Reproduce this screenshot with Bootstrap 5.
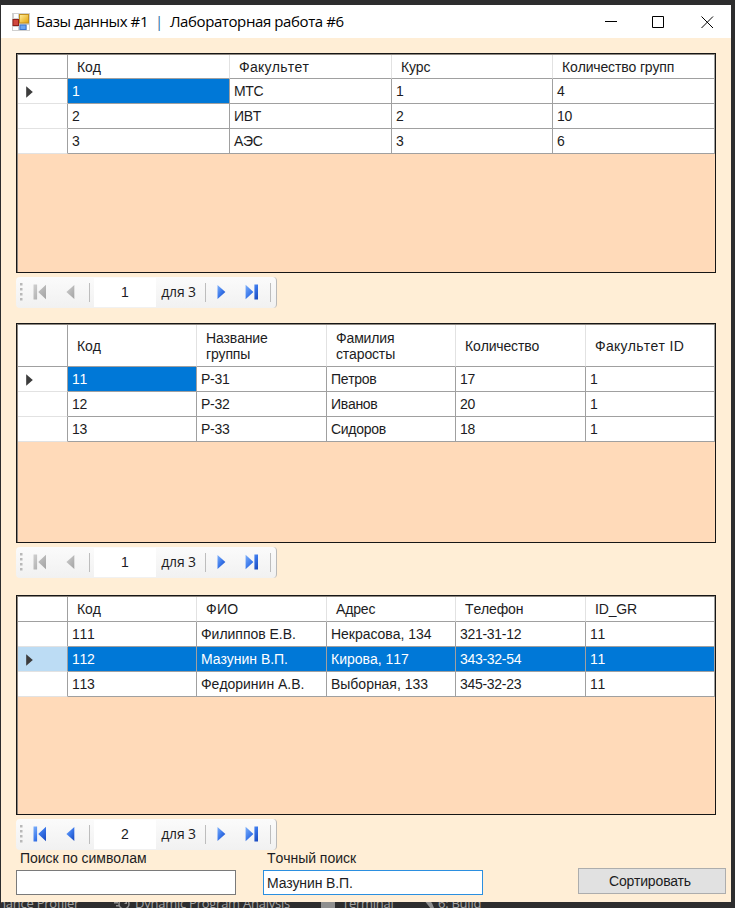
<!DOCTYPE html>
<html lang="ru">
<head>
<meta charset="utf-8">
<title>Базы данных #1 | Лабораторная работа #6</title>
<link href="https://cdn.jsdelivr.net/npm/bootstrap@5.3.0/dist/css/bootstrap.min.css" rel="stylesheet">
<style>
html,body{height:908px;overflow:hidden}
body{background:#2d2d2e;font:14px/16px "Liberation Sans",Arial,sans-serif;font-kerning:none;color:#1c1c22;padding:5px 4px 0 1px}
.win{width:730px;height:897px;background:#ffeed6}
.titlebar{height:33px;background:#fff;padding-left:11px;color:#000;font:15px/20px "Open Sans","Noto Sans",sans-serif}
.titletext{margin:-2px 0 0 6px;letter-spacing:-.4px;white-space:pre}
.bar{color:#2f6f9f}
.winbtns{margin-right:16px}
.client{padding:15px 15px 0}

/* data grids */
.datagrid{width:700px;height:220px;background:#ffdab9;border:1px solid #161616;box-shadow:inset 1px 1px 0 #8d8780;padding:1px 0 0 1px}
.datagrid table{width:697px;table-layout:fixed;border-collapse:separate;border-spacing:0;background:#fff}
.datagrid td,.datagrid th{height:25px;padding:0 0 0 4px;border-right:1px solid #a0a0a0;border-bottom:1px solid #a0a0a0;font-weight:400;vertical-align:middle;white-space:nowrap;letter-spacing:-.3px}
.datagrid thead th{height:24px;padding-left:9px;border-right-color:#e2e2e2;line-height:16px;letter-spacing:-.15px}
.datagrid.tall thead th{height:42px}
.datagrid.low thead th{height:25px}
.datagrid tbody th{border-bottom-color:#e2e2e2;padding-left:8px}
.datagrid thead th:first-child,.datagrid thead th:last-child{border-right-color:#a0a0a0}
.datagrid .sel{background:#0078d7;background-clip:padding-box;color:#fff}
.datagrid tbody th.cur{background:#bcdcf4}
.datagrid thead th.wide{letter-spacing:.3px}
.datagrid td.wide{letter-spacing:-.02px}
.datagrid svg{display:block;margin-top:1px}

/* record navigators */
.navi{width:261px;height:31px;border-radius:4px;background:linear-gradient(#fbfbfb,#f1f1f1) no-repeat;margin:4px 0 15px;border-right:1px solid #b9b9b9;padding-bottom:1px}
.navi>*{flex:none}
.nav-b{margin-bottom:17px}
.nav-c{margin-bottom:0}
.pos{width:62px;height:29px;background:#fff;line-height:29px;margin-left:4px}
.total{width:50px;text-align:center;font:14px/28px "Open Sans",sans-serif;letter-spacing:-.2px;padding-right:5px}
.sep{width:1px;height:19px;background:#bdbdbd}
.b1{margin-left:10px}.b2{margin-left:19px}.s1{margin-left:9px}.s2{margin-left:-1px}
.b3{margin-left:11px}.b4{margin-left:14px}.s3{margin-left:11px}
.live{fill:url(#gb)}
.off{fill:url(#gg)}

/* search row */
.bottomrow{width:715px}
.fieldlabel{height:17px;padding-left:4px;letter-spacing:-.04px}
.second{margin-left:27px}
.field{width:220px;height:25px;margin-top:3px;border:1px solid #7a7a7a;border-radius:0;background:#fff;padding:0 3px;font-size:14px;color:#1c1c22;letter-spacing:-.1px}
.field.focused{border-color:#2b8fe0}
.sortbtn{width:148px;height:26px;margin:18px 0 0 95px;background:#e1e1e1;border:1px solid #adadad;border-radius:0;padding:0 4px 0 0;font-size:14px;line-height:23px;color:#1c1c22;letter-spacing:-.15px}

/* editor strip behind the window */
.ide{height:6px;overflow:hidden;color:#a4a4a4;fill:#8f8f8f;font:13px/18px "Open Sans",sans-serif;letter-spacing:-.25px;white-space:nowrap}
.ide>div{margin-top:-8px;height:18px}
.ide span{flex:none}
.ide svg{flex:none;margin-top:3px}
</style>
<script src="https://cdn.jsdelivr.net/npm/bootstrap@5.3.0/dist/js/bootstrap.bundle.min.js"></script>
</head>
<body>
<svg width="0" height="0" class="position-absolute">
<defs>
<linearGradient id="gb" x1="0" y1="0" x2="1" y2="1"><stop offset="0" stop-color="#7db0fb"/><stop offset=".5" stop-color="#3a77ea"/><stop offset="1" stop-color="#1747bd"/></linearGradient>
<linearGradient id="gg" x1="0" y1="0" x2="1" y2="1"><stop offset="0" stop-color="#cfcfcf"/><stop offset="1" stop-color="#a2a2a2"/></linearGradient>
<linearGradient id="gy" x1="0" y1="0" x2="1" y2="1"><stop offset="0" stop-color="#fff0a0"/><stop offset="1" stop-color="#e3a005"/></linearGradient>
<symbol id="first" viewBox="0 0 14 16"><path d="M.5 .5h3.600v15H.5zM13 .8v14.400L5.200 8z"/></symbol>
<symbol id="prev" viewBox="0 0 14 16"><path d="M8.300 1v14L.4 8z"/></symbol>
<symbol id="next" viewBox="0 0 14 16"><path d="M.5 1v14L8.400 8z"/></symbol>
<symbol id="last" viewBox="0 0 14 16"><path d="M.6 .8v14.400L8.400 8zM9.400 .5H13v15H9.400z"/></symbol>
<symbol id="grip" viewBox="0 0 3 20"><path fill="#b9b9b9" d="M0 1h2.500v2.500H0zM0 6h2.500v2.500H0zM0 11h2.500v2.500H0zM0 16h2.500v2.500H0z"/></symbol>
<symbol id="cursor" viewBox="0 0 8 12"><path fill="#3c3c3c" d="M.2 .3v11.400L6.800 6z"/></symbol>
</defs>
</svg>

<main class="win d-flex flex-column">
<header class="titlebar d-flex align-items-center">
<svg width="18" height="18" viewBox="0 0 18 18"><path fill="#cfcfcf" d="M0 0h18v18H0z"/><path fill="#fff" d="M2 1h4v4H2zM1 14h5v3H1zM15 12h2v5h-2z"/><rect x="7.500" y="1.500" width="9" height="8.500" fill="url(#gy)" stroke="#c28f1d"/><rect x="1" y="6.500" width="5.500" height="6" fill="#d0483e" stroke="#8d2019"/><rect x="8" y="12" width="6" height="4.500" fill="#69a4f3" stroke="#3a75cf"/></svg>
<span class="titletext">Базы данных #1  <span class="bar">|</span>  Лабораторная работа #6</span>
<svg class="winbtns ms-auto" width="111" height="14" viewBox="0 0 111 14" fill="none" stroke="#000"><path d="M1 6.500h12M48.500 1.500h11v11h-11zM97.500 1.500l11.500 11.500M109 1.500L97.500 13"/></svg>
</header>

<div class="client flex-grow-1">
<section class="datagrid"><table>
<colgroup><col width="50"><col width="162"><col width="162"><col width="161"><col width="162"></colgroup>
<thead><tr><th></th><th>Код</th><th class="wide">Факультет</th><th>Курс</th><th>Количество групп</th></tr></thead>
<tbody>
<tr><th><svg width="8" height="12"><use href="#cursor"/></svg></th><td class="sel">1</td><td>МТС</td><td>1</td><td>4</td></tr>
<tr><th></th><td>2</td><td>ИВТ</td><td>2</td><td>10</td></tr>
<tr><th></th><td>3</td><td>АЭС</td><td>3</td><td>6</td></tr>
</tbody></table></section>
<nav class="navi d-flex align-items-center">
<svg width="3" height="20" class="ms-1"><use href="#grip"/></svg>
<svg class="off b1" width="14" height="16"><use href="#first"/></svg><svg class="off b2" width="14" height="16"><use href="#prev"/></svg><span class="sep s1"></span>
<span class="pos text-center">1</span><span class="total">для 3</span><span class="sep s2"></span>
<svg class="live b3" width="14" height="16"><use href="#next"/></svg><svg class="live b4" width="14" height="16"><use href="#last"/></svg><span class="sep s3"></span></nav>

<section class="datagrid tall"><table>
<colgroup><col width="50"><col width="129"><col width="130"><col width="129"><col width="130"><col width="129"></colgroup>
<thead><tr><th></th><th>Код</th><th>Название<br>группы</th><th>Фамилия<br>старосты</th><th>Количество</th><th class="wide">Факультет ID</th></tr></thead>
<tbody>
<tr><th><svg width="8" height="12"><use href="#cursor"/></svg></th><td class="sel">11</td><td>Р-31</td><td>Петров</td><td>17</td><td>1</td></tr>
<tr><th></th><td>12</td><td>Р-32</td><td>Иванов</td><td>20</td><td>1</td></tr>
<tr><th></th><td>13</td><td>Р-33</td><td>Сидоров</td><td>18</td><td>1</td></tr>
</tbody></table></section>
<nav class="navi nav-b d-flex align-items-center">
<svg width="3" height="20" class="ms-1"><use href="#grip"/></svg>
<svg class="off b1" width="14" height="16"><use href="#first"/></svg><svg class="off b2" width="14" height="16"><use href="#prev"/></svg><span class="sep s1"></span>
<span class="pos text-center">1</span><span class="total">для 3</span><span class="sep s2"></span>
<svg class="live b3" width="14" height="16"><use href="#next"/></svg><svg class="live b4" width="14" height="16"><use href="#last"/></svg><span class="sep s3"></span></nav>

<section class="datagrid low"><table>
<colgroup><col width="50"><col width="129"><col width="130"><col width="129"><col width="130"><col width="129"></colgroup>
<thead><tr><th></th><th>Код</th><th class="wide">ФИО</th><th>Адрес</th><th>Телефон</th><th>ID_GR</th></tr></thead>
<tbody>
<tr><th></th><td>111</td><td class="wide">Филиппов Е.В.</td><td class="wide">Некрасова, 134</td><td>321-31-12</td><td>11</td></tr>
<tr><th class="cur"><svg width="8" height="12"><use href="#cursor"/></svg></th><td class="sel">112</td><td class="sel wide">Мазунин В.П.</td><td class="sel wide">Кирова, 117</td><td class="sel">343-32-54</td><td class="sel">11</td></tr>
<tr><th></th><td>113</td><td class="wide">Федоринин А.В.</td><td class="wide">Выборная, 133</td><td>345-32-23</td><td>11</td></tr>
</tbody></table></section>
<nav class="navi nav-c d-flex align-items-center">
<svg width="3" height="20" class="ms-1"><use href="#grip"/></svg>
<svg class="live b1" width="14" height="16"><use href="#first"/></svg><svg class="live b2" width="14" height="16"><use href="#prev"/></svg><span class="sep s1"></span>
<span class="pos text-center">2</span><span class="total">для 3</span><span class="sep s2"></span>
<svg class="live b3" width="14" height="16"><use href="#next"/></svg><svg class="live b4" width="14" height="16"><use href="#last"/></svg><span class="sep s3"></span></nav>

<form class="bottomrow d-flex align-items-start">
<div><label class="fieldlabel d-block" for="s1">Поиск по символам</label><input id="s1" class="field d-block"></div>
<div class="second"><label class="fieldlabel d-block" for="s2">Точный поиск</label><input id="s2" class="field focused d-block" value="Мазунин В.П."></div>
<button type="button" class="btn sortbtn">Сортировать</button>
</form>
</div>
</main>
<footer class="ide"><div class="d-flex"><span style="width:120px;margin-left:-7px">mance Profiler</span>
<svg width="21" height="14" viewBox="0 0 21 14"><path d="M0 5h4v1.500H0zM2 8h3v1.500H2z"/><circle cx="10" cy="7" r="5" fill="none" stroke="#8f8f8f" stroke-width="1.500"/><path d="M10 7l3-3v3z"/></svg>
<span style="width:186px">Dynamic Program Analysis</span>
<svg width="21" height="14" viewBox="0 0 21 14"><path d="M0 2h14v10H0z"/></svg>
<span style="width:82px">Terminal</span>
<svg width="14" height="14" viewBox="0 0 14 14"><path d="M0 3l4-1 4 4 2 5-3 1z"/></svg>
<span>6: Build</span></div></footer>
</body>
</html>
